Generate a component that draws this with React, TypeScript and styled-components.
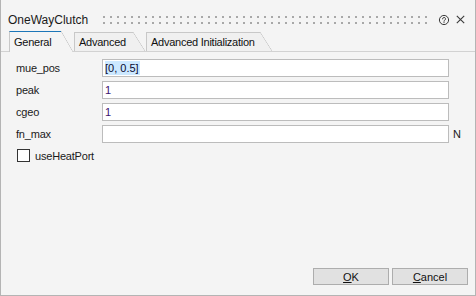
import React from 'react';
import styled, { createGlobalStyle } from 'styled-components';

const GlobalStyle = createGlobalStyle`
  html, body {
    margin: 0;
    padding: 0;
    background: #f4f4f4;
  }
  * {
    box-sizing: border-box;
  }
`;

const Window = styled.div`
  width: 476px;
  height: 296px;
  display: flex;
  flex-direction: column;
  background: #f4f4f4;
  border: 1px solid #b4b4b4;
  border-top: none;
  font-family: "Liberation Sans", Arial, sans-serif;
  font-size: 11px;
  color: #000;
`;

const TitleBar = styled.div`
  display: flex;
  align-items: center;
  height: 31px;
  padding: 8px 10px 0 7px;
`;

const Title = styled.div`
  flex: 0 0 95px;
  font-size: 12px;
  color: #1a1a1a;
`;

const Grip = styled.div`
  flex: 1;
  height: 8px;
  margin-right: 10px;
  background: conic-gradient(from 270deg at 2px 2px, #a8a8a8 25%, transparent 0) 0 0 / 7px 6px;
`;

const IconButton = styled.div`
  display: flex;
  align-items: center;
  margin-left: ${(p: { $gap: number }) => p.$gap}px;
  color: #3a3a3a;
`;

const TabBar = styled.div`
  display: flex;
  align-items: flex-end;
  height: 21px;
  padding-left: 8px;
  border-bottom: 1px solid #d2d2d2;
`;

const Tab = styled.div<{ $w: number; $active?: boolean }>`
  position: relative;
  flex: 0 0 ${(p) => p.$w}px;
  height: ${(p) => (p.$active ? 21 : 19)}px;
  margin-right: 13px;
  margin-bottom: ${(p) => (p.$active ? -1 : 0)}px;
  padding-left: 4px;
  display: flex;
  align-items: center;
  white-space: nowrap;
  letter-spacing: -0.25px;
  background: ${(p) => (p.$active ? '#f4f4f4' : '#f0f0f0')};
  border-left: 1px solid #c8c8c8;
  border-top: 1px solid ${(p) => (p.$active ? '#1c76b8' : '#c8c8c8')};
  color: #111;
  z-index: ${(p) => (p.$active ? 1 : 0)};

  &::after {
    content: '';
    position: absolute;
    top: -1px;
    right: -12px;
    width: 12px;
    height: calc(100% + 1px);
    background: linear-gradient(
      to top right,
      ${(p) => (p.$active ? '#f4f4f4' : '#f0f0f0')} calc(50% - 0.6px),
      #c8c8c8 50%,
      transparent calc(50% + 0.6px)
    );
  }
`;

const Pane = styled.div`
  flex: 1;
  display: flex;
  flex-direction: column;
  padding: 7px 7px 10px 15px;
`;

const Form = styled.div`
  display: grid;
  grid-template-columns: 86px 347px auto;
  grid-auto-rows: 18px;
  row-gap: 4px;
  align-items: center;
`;

const Label = styled.div`
  color: #1a1a1a;
  letter-spacing: -0.2px;
`;

const Field = styled.div<{ $modified?: boolean }>`
  height: 18px;
  display: flex;
  align-items: center;
  padding-left: 2px;
  background: #fff;
  border: 1px solid #bcbcbc;
  color: ${(p) => (p.$modified ? '#3c1270' : '#0a0a30')};
`;

const Selected = styled.span`
  background: #cce8ff;
  padding: 1px 1px 1px 0;
`;

const Unit = styled.div`
  padding-left: 4px;
  color: #1a1a1a;
`;

const CheckRow = styled.label`
  grid-column: 1 / -1;
  display: flex;
  align-items: center;
  gap: 5px;
  height: 17px;
  margin-top: -1px;
  letter-spacing: -0.2px;
  color: #1a1a1a;
`;

const Box = styled.span`
  width: 13px;
  height: 13px;
  background: #fff;
  border: 1px solid #333;
  margin-left: 1px;
`;

const ButtonRow = styled.div`
  margin-top: auto;
  display: flex;
  justify-content: flex-end;
  gap: 3px;
`;

const Button = styled.button`
  width: 76px;
  height: 17px;
  padding: 0;
  background: #e1e1e1;
  border: 1px solid #adadad;
  font-family: inherit;
  font-size: 11px;
  color: #111;

  u {
    text-decoration: underline;
    text-underline-offset: 1px;
  }
`;

const HelpIcon = () => (
  <svg width="12" height="12" viewBox="0 0 12 12" fill="none" stroke="currentColor" strokeWidth="1">
    <circle cx="6" cy="6" r="4.6" />
    <path d="M4.6 4.9a1.45 1.45 0 1 1 2.2 1.2c-.55.35-.8.6-.8 1.2" strokeLinecap="round" />
    <circle cx="6" cy="8.6" r="0.55" fill="currentColor" stroke="none" />
  </svg>
);

const CloseIcon = () => (
  <svg width="9" height="9" viewBox="0 0 9 9" stroke="currentColor" strokeWidth="1.1">
    <path d="M0.8 0.8L8.2 8.2M8.2 0.8L0.8 8.2" />
  </svg>
);

const rows = [
  { name: 'mue_pos', value: '[0, 0.5]', selected: true },
  { name: 'peak', value: '1', modified: true },
  { name: 'cgeo', value: '1', modified: true },
  { name: 'fn_max', value: '', unit: 'N' },
];

const App: React.FC = () => {
  return (
    <>
      <GlobalStyle />
      <Window>
        <TitleBar>
          <Title>OneWayClutch</Title>
          <Grip />
          <IconButton $gap={0}>
            <HelpIcon />
          </IconButton>
          <IconButton $gap={6}>
            <CloseIcon />
          </IconButton>
        </TitleBar>
        <TabBar>
          <Tab $w={52} $active>General</Tab>
          <Tab $w={59}>Advanced</Tab>
          <Tab $w={114}>Advanced Initialization</Tab>
        </TabBar>
        <Pane>
          <Form>
            {rows.map((r) => (
              <React.Fragment key={r.name}>
                <Label>{r.name}</Label>
                <Field $modified={r.modified}>
                  {r.selected ? <Selected>{r.value}</Selected> : r.value}
                </Field>
                <Unit>{r.unit}</Unit>
              </React.Fragment>
            ))}
            <CheckRow>
              <Box />
              useHeatPort
            </CheckRow>
          </Form>
          <ButtonRow>
            <Button>
              <u>O</u>K
            </Button>
            <Button>
              <u>C</u>ancel
            </Button>
          </ButtonRow>
        </Pane>
      </Window>
    </>
  );
};

export default App;
